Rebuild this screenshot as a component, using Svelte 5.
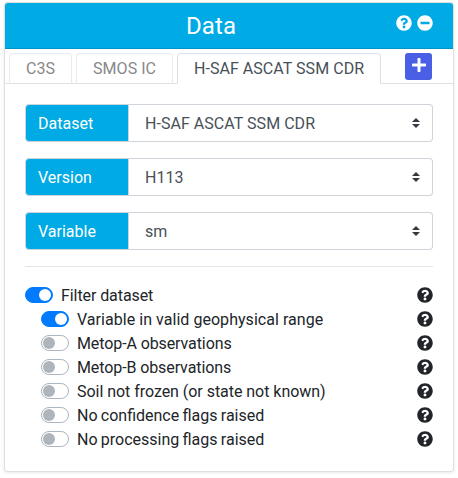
<script>
  const tabs = ['C3S', 'SMOS IC', 'H-SAF ASCAT SSM CDR'];
  let active = $state(2);
  const fields = [
    ['Dataset', 'H-SAF ASCAT SSM CDR'],
    ['Version', 'H113'],
    ['Variable', 'sm']
  ];
  let filters = $state([
    { label: 'Filter dataset', on: true, root: true, tracking: -0.08 },
    { label: 'Variable in valid geophysical range', on: true, tracking: 0.04 },
    { label: 'Metop-A observations', on: false, tracking: -0.1 },
    { label: 'Metop-B observations', on: false, tracking: -0.1 },
    { label: 'Soil not frozen (or state not known)', on: false, tracking: -0.04 },
    { label: 'No confidence flags raised', on: false, tracking: 0, words: -0.7 },
    { label: 'No processing flags raised', on: false, tracking: 0, words: -0.7 }
  ]);
</script>

{#snippet help()}
  <svg class="icon" viewBox="0 0 512 512"><path fill="currentColor" d="M504 256c0 136.997-111.043 248-248 248S8 392.997 8 256C8 119.083 119.043 8 256 8s248 111.083 248 248zM262.655 90c-54.497 0-89.255 22.957-116.549 63.758-3.536 5.286-2.353 12.415 2.715 16.258l34.699 26.31c5.205 3.947 12.621 3.008 16.665-2.122 17.864-22.658 30.113-35.797 57.303-35.797 20.429 0 45.698 13.148 45.698 32.958 0 14.976-12.363 22.667-32.534 33.976C247.128 238.528 216 254.941 216 296v4c0 6.627 5.373 12 12 12h56c6.627 0 12-5.373 12-12v-1.333c0-28.462 83.186-29.647 83.186-106.667 0-58.002-60.165-102-116.531-102zM256 338c-25.365 0-46 20.635-46 46 0 25.364 20.635 46 46 46s46-20.636 46-46c0-25.365-20.635-46-46-46z"/></svg>
{/snippet}

<div class="card">
  <header>
    <h1>Data</h1>
    <div class="tools">
      {@render help()}
      <svg class="icon" viewBox="0 0 512 512"><path fill="currentColor" d="M256 8C119 8 8 119 8 256s111 248 248 248 248-111 248-248S393 8 256 8zM124 296c-6.600 0-12-5.400-12-12v-56c0-6.600 5.400-12 12-12h264c6.600 0 12 5.400 12 12v56c0 6.600-5.400 12-12 12H124z"/></svg>
    </div>
  </header>
  <nav>
    {#each tabs as tab, i}
      <button class="tab" class:active={active === i} onclick={() => (active = i)}>{tab}</button>
    {/each}
    <button class="add" aria-label="Add">
      <svg viewBox="0 0 448 512"><path fill="currentColor" d="M416 208H272V64c0-17.670-14.330-32-32-32h-32c-17.670 0-32 14.330-32 32v144H32c-17.670 0-32 14.330-32 32v32c0 17.670 14.330 32 32 32h144v144c0 17.670 14.330 32 32 32h32c17.670 0 32-14.330 32-32V304h144c17.670 0 32-14.330 32-32v-32c0-17.670-14.330-32-32-32z"/></svg>
    </button>
  </nav>
  <div class="body">
    {#each fields as [name, value]}
      <div class="field">
        <span class="name">{name}</span>
        <span class="select">
          <span class="value">{value}</span>
          <svg class="caret" viewBox="0 0 4 5"><path fill="#343a40" d="M2 0L0 2h4zm0 5L0 3h4z"/></svg>
        </span>
      </div>
    {/each}
    <hr />
    {#each filters as f}
      <div class="filter" class:sub={!f.root}>
        <button class="switch" class:on={f.on} aria-label={f.label} onclick={() => (f.on = !f.on)}><i></i></button>
        <span class="label" style="letter-spacing: {f.tracking}px; word-spacing: {f.words ?? 0}px">{f.label}</span>
        {@render help()}
      </div>
    {/each}
  </div>
</div>

<style>
  :global(body) { background: #fff; }
  .card, .card * { box-sizing: border-box; }
  .card {
    width: 450px; height: 470px; margin: 2px 4px;
    border: 1px solid rgba(0, 0, 0, .125); border-radius: 4px;
    background: #fff; box-shadow: 0 2px 4px rgba(0, 0, 0, .075);
    font: 16px/24px Roboto, sans-serif; color: #212529;
    display: flex; flex-direction: column;
  }
  :global(#app) { display: flow-root; }
  header {
    display: grid; grid-template-columns: 1fr auto 1fr;
    height: 46px; padding: 0 36px 0 0;
    background: #00aae4; color: #fff;
    border-bottom: 1px solid rgba(0, 0, 0, .125);
    border-radius: 3px 3px 0 0;
  }
  h1 { grid-column: 2; margin: 0; font-size: 24px; font-weight: 400; line-height: 46px; letter-spacing: .1px; }
  .tools { display: flex; justify-content: flex-end; gap: 5px; padding-top: 12px; margin-right: -16px; }
  .icon { width: 16px; height: 16px; flex: none; display: block; }
  button { font: inherit; padding: 0; margin: 0; }
  nav { display: flex; gap: 4px; height: 35px; padding: 4px 0 0 4px; border-bottom: 1px solid #dee2e6; }
  .tab {
    height: 31px; padding: 0 16px; color: #888; letter-spacing: .04px;
    background: #fff; border: 1px solid #e9ecef; border-bottom-color: #dee2e6;
    border-radius: 4px 4px 0 0; white-space: nowrap;
  }
  .tab.active { color: #495057; border-color: #dee2e6 #dee2e6 #fff; }
  .add {
    width: 27px; height: 27px; margin-left: 20px; border: 0; border-radius: 3px;
    background: #485fe6; color: #fff; display: flex; justify-content: center; padding-top: 4px;
  }
  .add svg { width: 14px; height: 16px; }
  .body { padding: 20px; }
  .field { display: flex; height: 38px; margin-bottom: 16px; }
  .name {
    width: 104px; padding: 7px 12px 5px; background: #00aae4; color: #fff;
    border: 1px solid #ced4da; border-radius: 4px 0 0 4px;
  }
  .select {
    flex: 1; display: flex; align-items: center; justify-content: space-between;
    padding: 0 12px 0 16px; color: #495057;
    border: 1px solid #ced4da; border-left: 0; border-radius: 0 4px 4px 0;
  }
  .value { padding-top: 2px; letter-spacing: .04px; }
  .caret { width: 8px; height: 10px; }
  hr { margin: 0 0 16px; border: 0; border-top: 1px solid rgba(0, 0, 0, .1); }
  .filter { display: flex; align-items: center; height: 24px; }
  .sub { padding-left: 16px; }
  .label { flex: 1; padding: 2px 0 0 8px; }
  .switch {
    width: 28px; height: 16px; padding: 1px; display: flex; background: #fff;
    border: 1px solid #adb5bd; border-radius: 8px;
  }
  .switch i { width: 12px; height: 12px; border-radius: 6px; background: #adb5bd; }
  .switch.on { justify-content: flex-end; background: #007bff; border-color: #007bff; }
  .switch.on i { background: #fff; }
</style>
